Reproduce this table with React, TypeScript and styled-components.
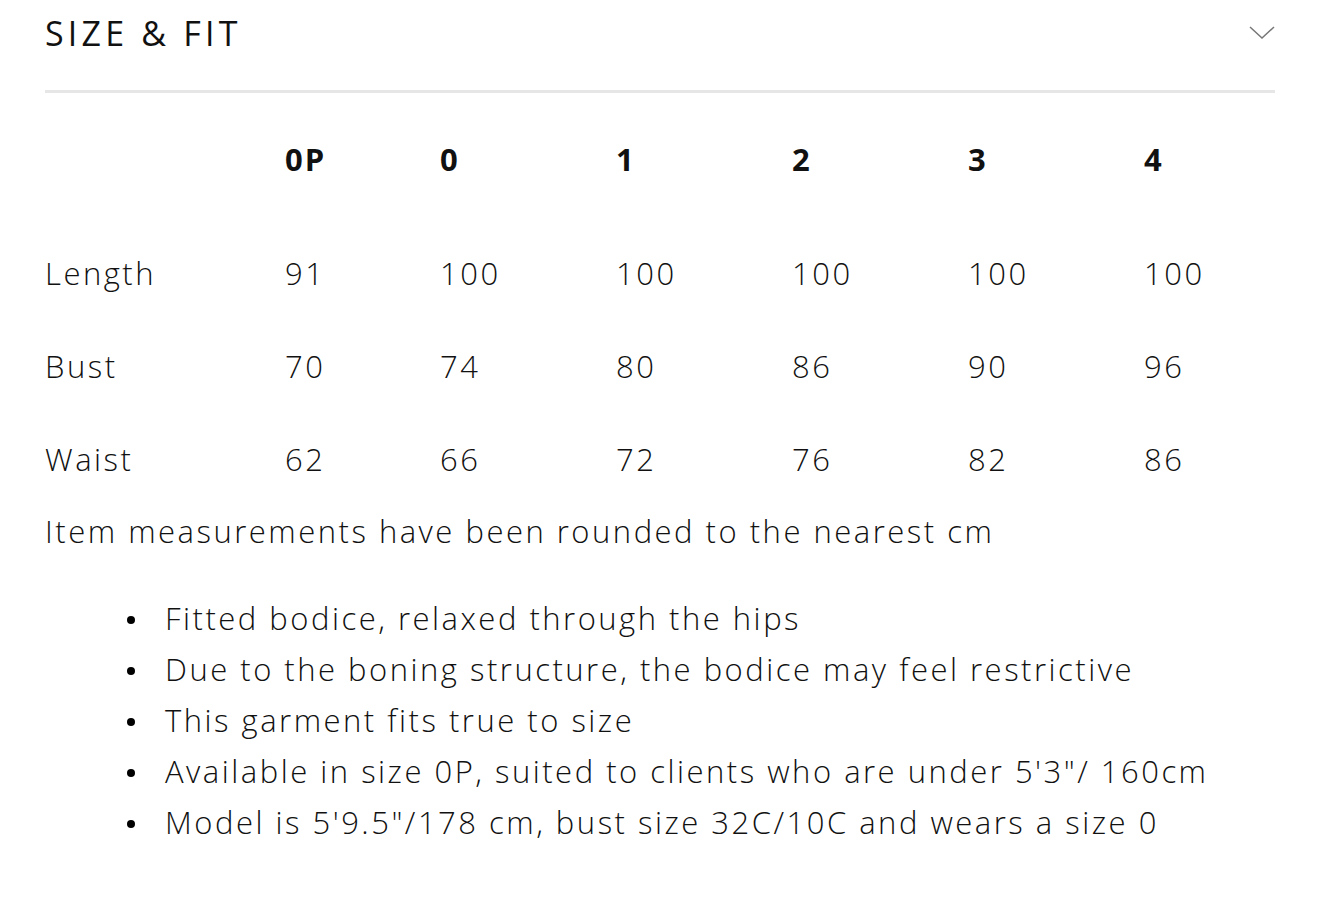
import React from "react";
import styled, { createGlobalStyle } from "styled-components";

const Global = createGlobalStyle`
  html, body { margin: 0; padding: 0; background: #fff; }
  body { font-family: "Open Sans", Lato, sans-serif; color: #111; }
`;

const Page = styled.div`
  padding: 0 45px;
  width: 1230px;
`;

const Header = styled.div`
  display: flex;
  justify-content: space-between;
  align-items: center;
  height: 66px;
  margin-bottom: 24px;
`;

const Title = styled.h2`
  margin: 0;
  font-size: 34px;
  font-weight: 400;
  letter-spacing: 4.2px;
  line-height: 66px;
`;

const Divider = styled.div`
  height: 3px;
  background: #e6e6e6;
`;

const Table = styled.div`
  margin-top: 19.5px;
  display: grid;
  grid-template-columns: 240px 155px 176px 176px 176px 176px 1fr;
`;

const Cell = styled.div<{ $head?: boolean }>`
  height: 93px;
  line-height: 93px;
  font-size: 31px;
  font-weight: ${(p) => (p.$head ? 700 : 300)};
  letter-spacing: ${(p) => (p.$head ? "2px" : "2.5px")};
  margin-bottom: ${(p) => (p.$head ? "21px" : "0")};
`;

const Note = styled.p`
  margin: 0;
  font-size: 31px;
  font-weight: 300;
  line-height: 51px;
  letter-spacing: 2.5px;
`;

const List = styled.ul`
  margin: 36px 0 0;
  padding-left: 120px;
  list-style: none;
`;

const Item = styled.li`
  position: relative;
  font-size: 31px;
  font-weight: 300;
  line-height: 51px;
  letter-spacing: 2.5px;

  &::before {
    content: "";
    position: absolute;
    left: -38px;
    top: 23px;
    width: 8px;
    height: 8px;
    border-radius: 50%;
    background: #000;
  }
`;

const sizes = ["0P", "0", "1", "2", "3", "4"];
const rows: [string, string[]][] = [
  ["Length", ["91", "100", "100", "100", "100", "100"]],
  ["Bust", ["70", "74", "80", "86", "90", "96"]],
  ["Waist", ["62", "66", "72", "76", "82", "86"]],
];

const Chevron = () => (
  <svg width="26" height="16" viewBox="0 0 26 16" fill="none">
    <polyline points="1,2 13,13 25,2" stroke="#777" strokeWidth="1.5" />
  </svg>
);

export default function App() {
  return (
    <Page>
      <Global />
      <Header>
        <Title>SIZE &amp; FIT</Title>
        <Chevron />
      </Header>
      <Divider />
      <Table>
        <Cell $head />
        {sizes.map((s) => (
          <Cell $head key={s}>{s}</Cell>
        ))}
        {rows.map(([label, vals]) => (
          <React.Fragment key={label}>
            <Cell>{label}</Cell>
            {vals.map((v, i) => (
              <Cell key={i}>{v}</Cell>
            ))}
          </React.Fragment>
        ))}
      </Table>
      <Note>Item measurements have been rounded to the nearest cm</Note>
      <List>
        <Item>Fitted bodice, relaxed through the hips</Item>
        <Item>Due to the boning structure, the bodice may feel restrictive</Item>
        <Item>This garment fits true to size</Item>
        <Item>Available in size 0P, suited to clients who are under 5'3"/ 160cm</Item>
        <Item>Model is 5'9.5"/178 cm, bust size 32C/10C and wears a size 0</Item>
      </List>
    </Page>
  );
}
